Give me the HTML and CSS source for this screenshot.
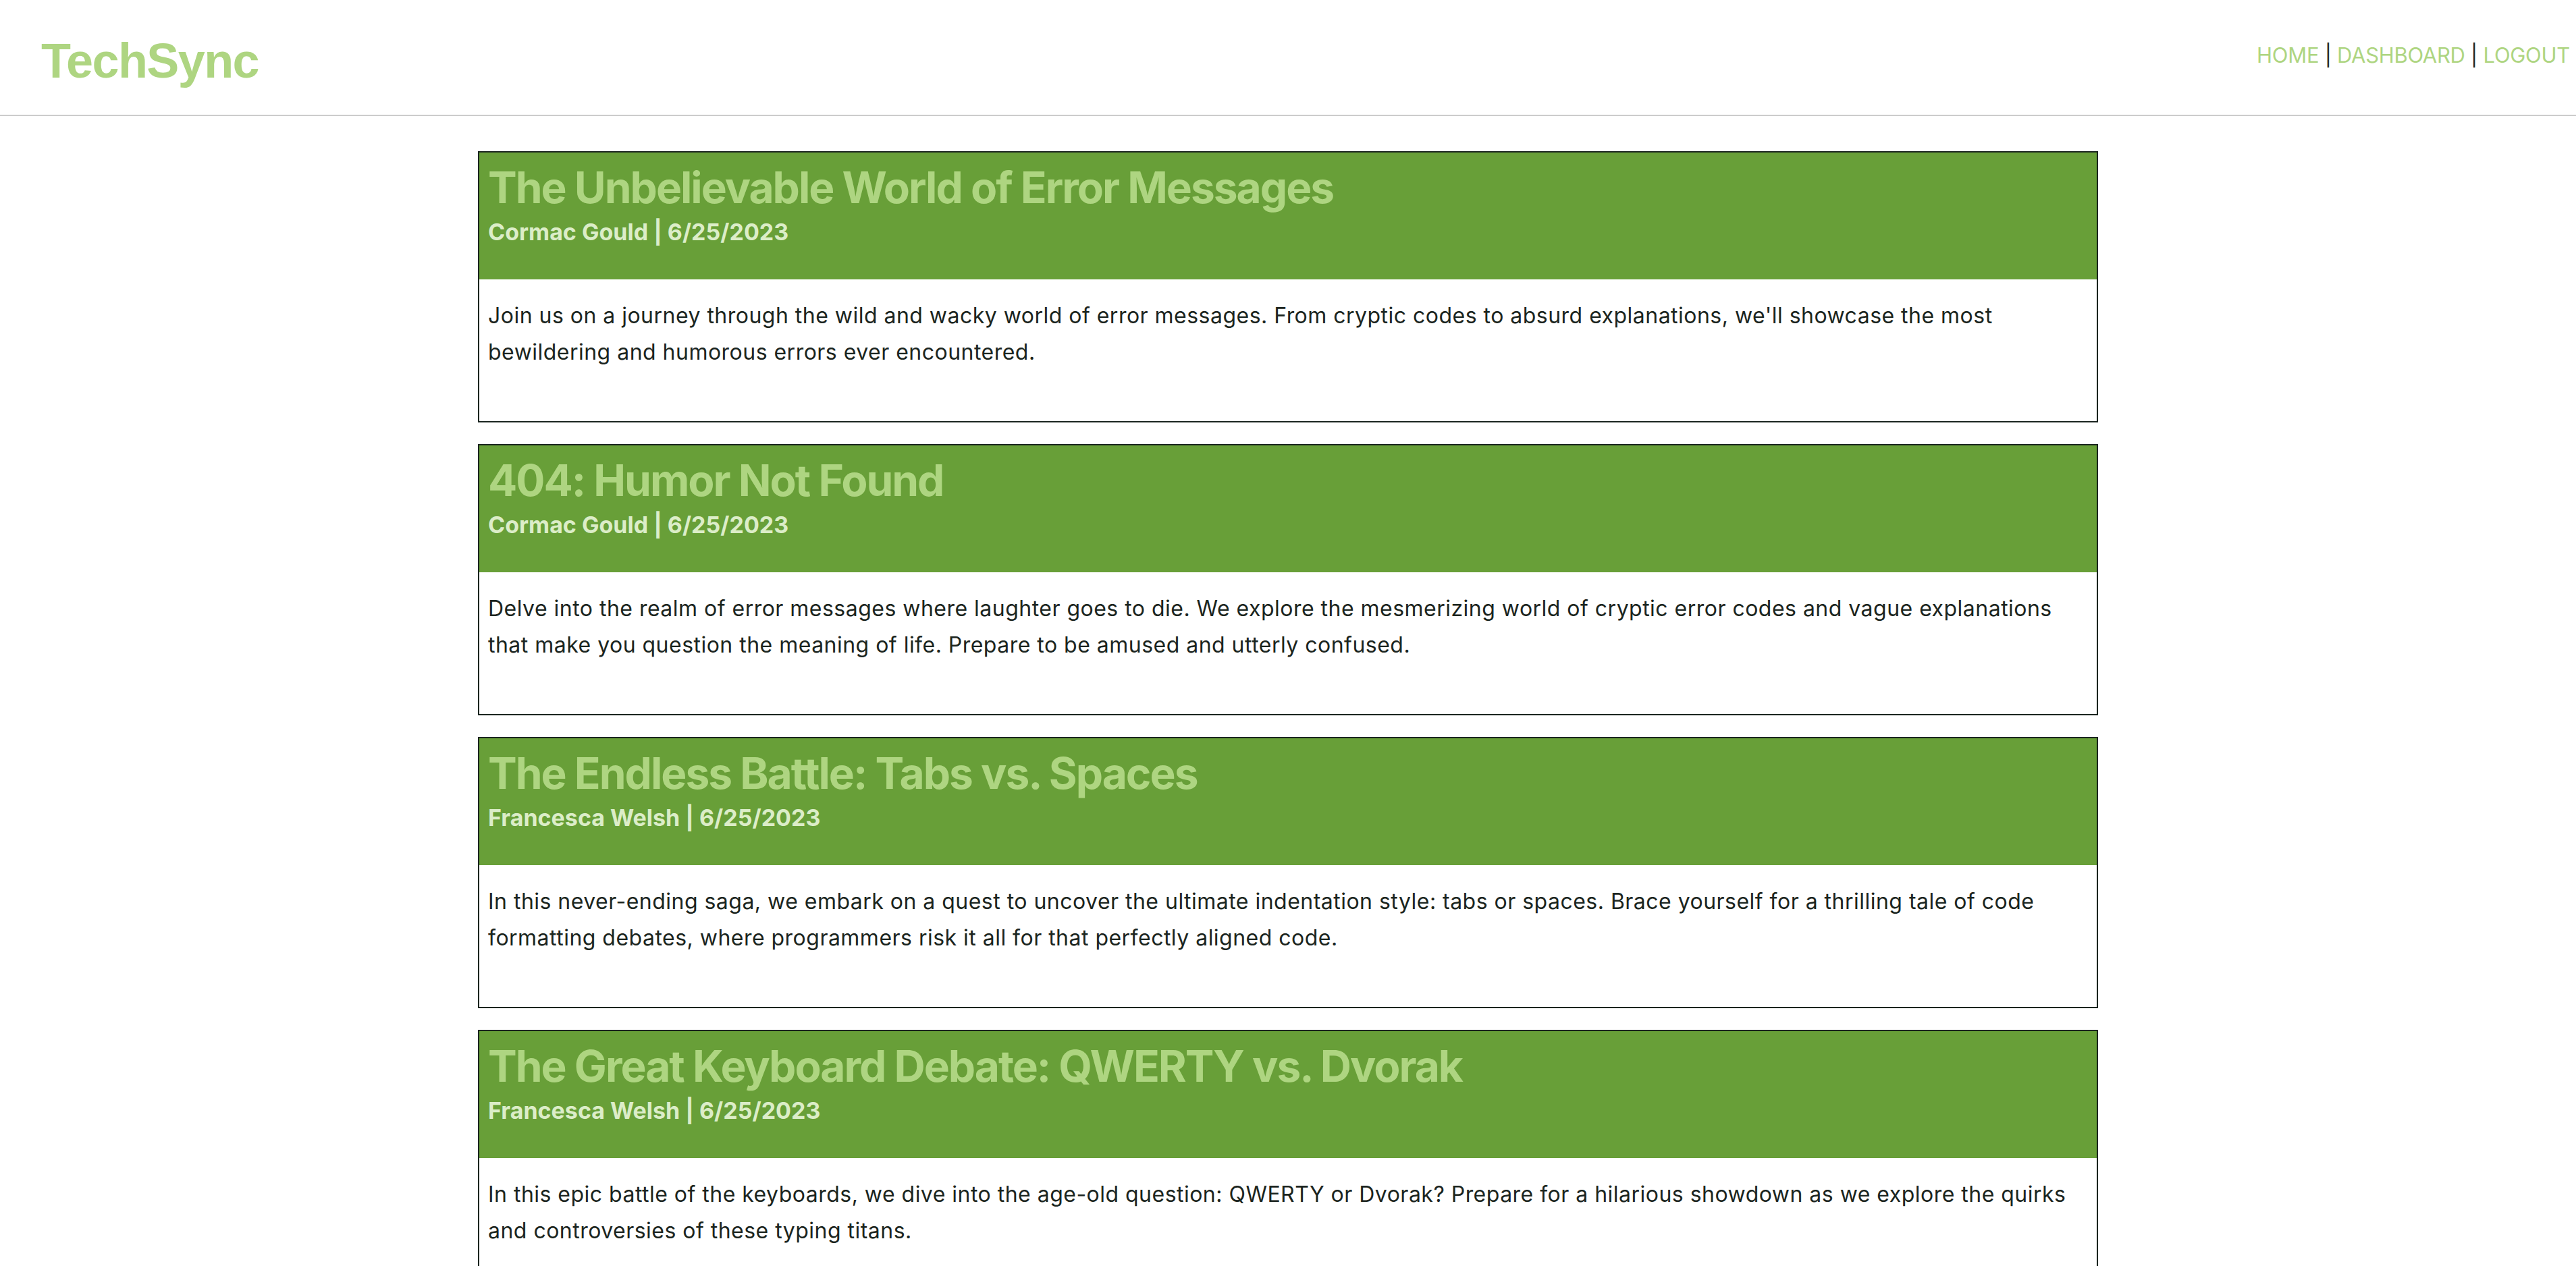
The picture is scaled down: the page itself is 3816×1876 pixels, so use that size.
FILE: index.html
```html
<!DOCTYPE html>
<html lang="en">
<head>
<meta charset="utf-8">
<title>TechSync</title>
<link rel="stylesheet" href="styles.css">
</head>
<body>
<header class="site-header">
  <a class="logo" href="#">TechSync</a>
  <nav class="nav">
    <a href="#">HOME</a> <span class="sep">|</span> <a href="#">DASHBOARD</a> <span class="sep">|</span> <a href="#">LOGOUT</a>
  </nav>
</header>
<main class="posts">
  <article class="post">
    <div class="post-head">
      <h2 class="post-title">The Unbelievable World of Error Messages</h2>
      <h4 class="post-meta">Cormac Gould | 6/25/2023</h4>
    </div>
    <div class="post-body">
      <p>Join us on a journey through the wild and wacky world of error messages. From cryptic codes to absurd explanations, we'll showcase the most bewildering and humorous errors ever encountered.</p>
    </div>
  </article>
  <article class="post">
    <div class="post-head">
      <h2 class="post-title">404: Humor Not Found</h2>
      <h4 class="post-meta">Cormac Gould | 6/25/2023</h4>
    </div>
    <div class="post-body">
      <p>Delve into the realm of error messages where laughter goes to die. We explore the mesmerizing world of cryptic error codes and vague explanations that make you question the meaning of life. Prepare to be amused and utterly confused.</p>
    </div>
  </article>
  <article class="post">
    <div class="post-head">
      <h2 class="post-title">The Endless Battle: Tabs vs. Spaces</h2>
      <h4 class="post-meta">Francesca Welsh | 6/25/2023</h4>
    </div>
    <div class="post-body">
      <p>In this never-ending saga, we embark on a quest to uncover the ultimate indentation style: tabs or spaces. Brace yourself for a thrilling tale of code formatting debates, where programmers risk it all for that perfectly aligned code.</p>
    </div>
  </article>
  <article class="post">
    <div class="post-head">
      <h2 class="post-title">The Great Keyboard Debate: QWERTY vs. Dvorak</h2>
      <h4 class="post-meta">Francesca Welsh | 6/25/2023</h4>
    </div>
    <div class="post-body">
      <p>In this epic battle of the keyboards, we dive into the age-old question: QWERTY or Dvorak? Prepare for a hilarious showdown as we explore the quirks and controversies of these typing titans.</p>
    </div>
  </article>
</main>
</body>
</html>
```
FILE: styles.css
```css
* { box-sizing: border-box; }

body {
  margin: 0;
  background: #ffffff;
  font-family: Inter, "Noto Sans", sans-serif;
  color: #1b2520;
}

a { text-decoration: none; }

.site-header {
  display: flex;
  justify-content: space-between;
  align-items: flex-start;
  height: 172px;
  padding: 0 9px 0 61px;
  border-bottom: 2px solid #cccccc;
}

.logo {
  margin-top: 50px;
  font-family: "Liberation Sans", Arial, sans-serif;
  font-weight: 700;
  font-size: 72px;
  line-height: 80px;
  letter-spacing: -1.6px;
  color: #aed581;
}

.nav {
  margin-top: 63px;
  font-size: 31px;
  line-height: 38px;
  letter-spacing: -0.3px;
  color: #1b2520;
}

.nav a { color: #aed581; }

.posts {
  display: flex;
  flex-direction: column;
  gap: 32px;
  width: 2400px;
  margin: 0 auto;
  padding-top: 52px;
}

.post {
  border: 2px solid #1b2520;
}

.post-head {
  background: #689f38;
  height: 188px;
  padding: 13px 13px 0;
}

.post-title {
  margin: 0;
  font-size: 64px;
  line-height: 77px;
  font-weight: 700;
  letter-spacing: -2px;
  color: #aed581;
}

.post-meta {
  margin: 7px 0 0;
  font-size: 34px;
  line-height: 41px;
  font-weight: 700;
  color: #dcedc8;
}

.post-body {
  height: 210px;
  padding: 27px 13px 0;
}

.post-body p {
  margin: 0;
  font-size: 32px;
  line-height: 54px;
  letter-spacing: 0.48px;
  color: #1b2520;
}
```
